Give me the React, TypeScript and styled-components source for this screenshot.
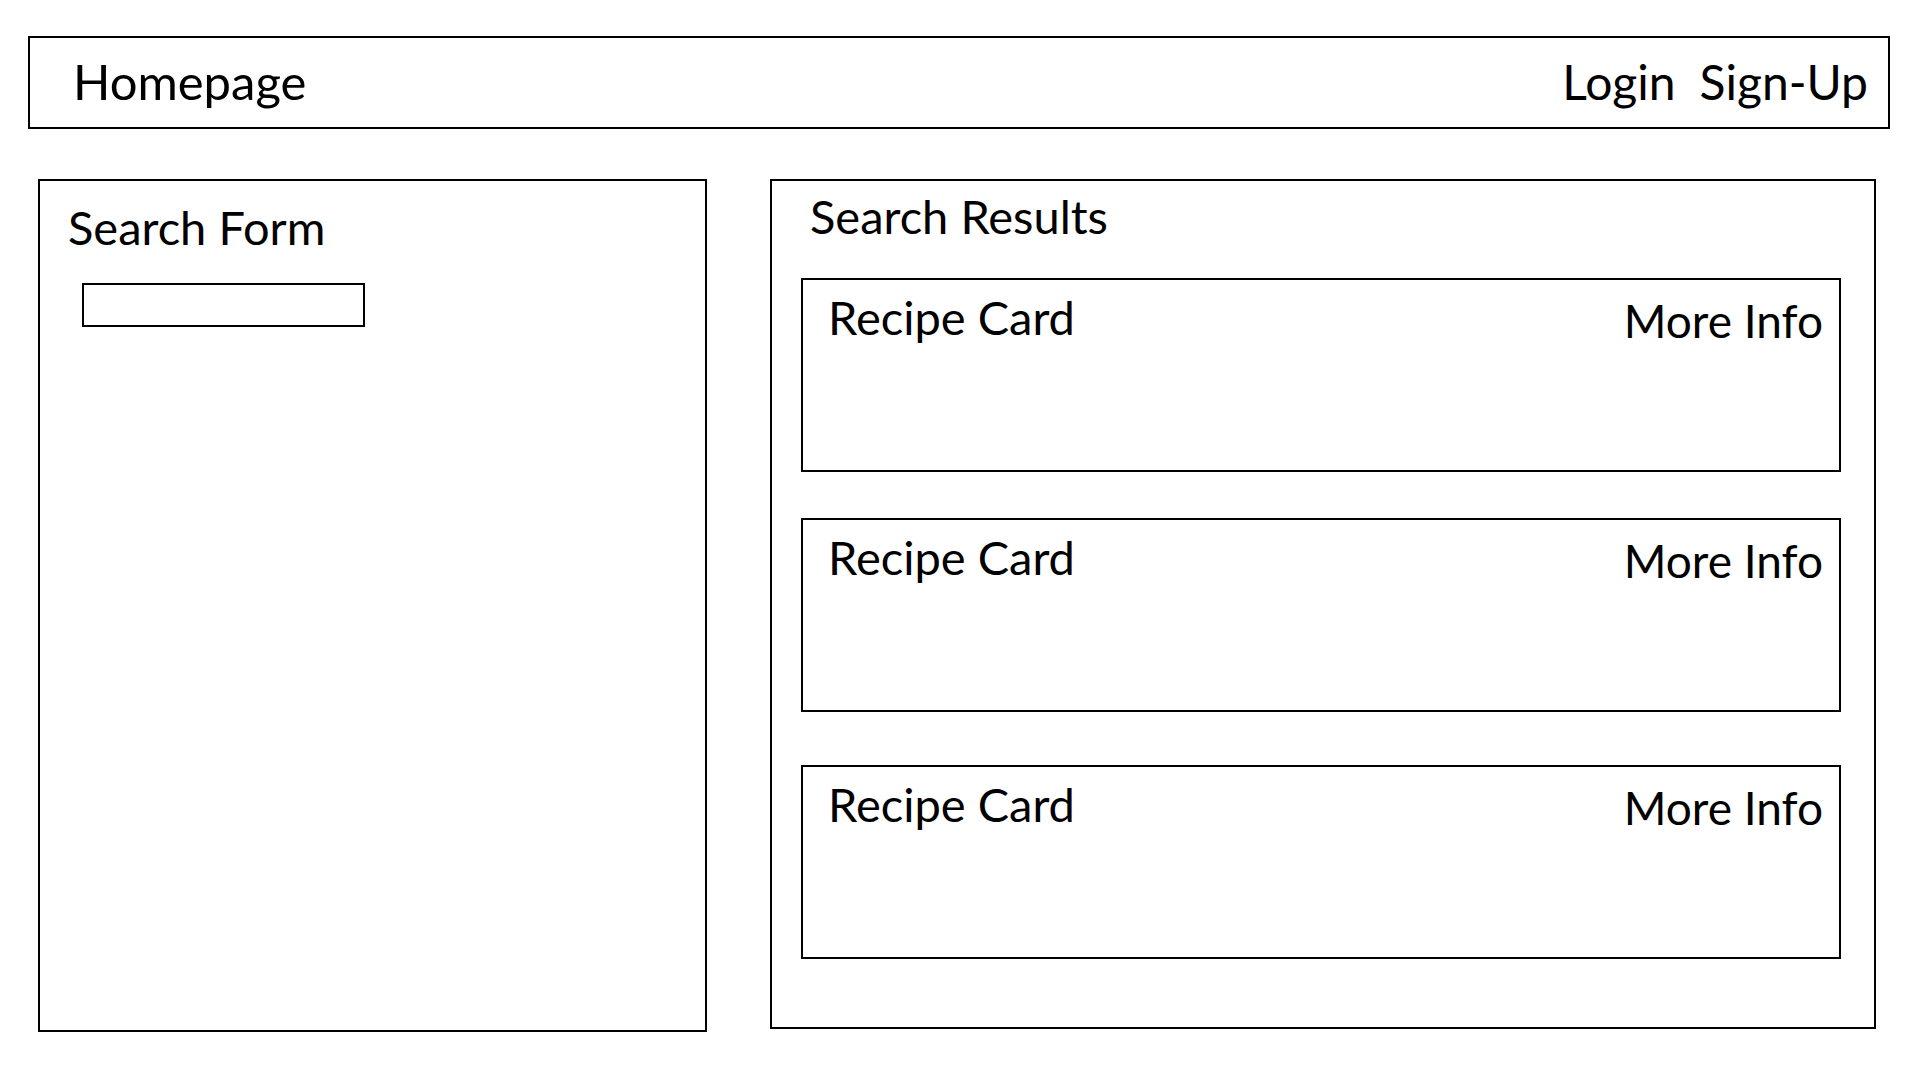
import { createGlobalStyle } from 'styled-components';
import styled from 'styled-components';

/* ─── Global ─── */
const GlobalStyle = createGlobalStyle`
  html, body {
    margin: 0;
    padding: 0;
    background: #fff;
  }
  body {
    font-family: Lato, 'Open Sans', sans-serif;
    color: #000;
  }
  * {
    box-sizing: border-box;
  }
`;

/* ─── Data ─── */
const recipes = [
  { id: 1, title: 'Recipe Card', gap: 0 },
  { id: 2, title: 'Recipe Card', gap: 46 },
  { id: 3, title: 'Recipe Card', gap: 53 },
];

/* ─── Layout ─── */
const Page = styled.div`
  width: 1920px;
  height: 1080px;
  padding: 36px 30px 0 28px;
`;

const Header = styled.header`
  height: 93px;
  border: 2px solid #000;
  display: flex;
  align-items: center;
  justify-content: space-between;
  padding: 0 20px 2px 43px;
`;

const Brand = styled.a`
  font-size: 49px;
  line-height: 1;
  color: #000;
  text-decoration: none;
`;

const AuthLinks = styled.nav`
  display: flex;
  gap: 24px;
`;

const AuthLink = styled.a`
  font-size: 48px;
  line-height: 1;
  color: #000;
  text-decoration: none;
`;

const Main = styled.main`
  display: flex;
  align-items: flex-start;
  gap: 63px;
  margin-top: 50px;
  padding-left: 10px;
`;

const Panel = styled.section<{ $width: number; $height: number }>`
  width: ${(p) => p.$width}px;
  height: ${(p) => p.$height}px;
  border: 2px solid #000;
  display: flex;
  flex-direction: column;
`;

/* ─── Search form ─── */
const FormPanel = styled(Panel)`
  padding: 23px 0 0 28px;
`;

const PanelTitle = styled.h2<{ $size: number; $indent?: number }>`
  margin: 0 0 0 ${(p) => p.$indent ?? 0}px;
  font-weight: 400;
  font-size: ${(p) => p.$size}px;
  line-height: 1;
`;

const SearchInput = styled.input`
  width: 283px;
  height: 44px;
  margin: 32px 0 0 14px;
  border: 2px solid #000;
  border-radius: 0;
  padding: 0 10px;
  font-family: inherit;
  font-size: 20px;
  outline: none;
  background: #fff;
`;

/* ─── Results ─── */
const ResultsPanel = styled(Panel)`
  padding: 12px 33px 0 29px;
`;

const CardList = styled.div`
  display: flex;
  flex-direction: column;
  margin-top: 38px;
`;

const RecipeCard = styled.article<{ $gap: number }>`
  height: 194px;
  margin-top: ${(p) => p.$gap}px;
  border: 2px solid #000;
  display: flex;
  justify-content: space-between;
  align-items: flex-start;
  padding: 14px 16px 0 25px;
`;

const CardTitle = styled.h3`
  margin: 0;
  font-weight: 400;
  font-size: 47px;
  line-height: 1;
`;

const MoreInfo = styled.a`
  margin-top: 4px;
  font-size: 46px;
  line-height: 1;
  color: #000;
  text-decoration: none;
`;

export default function App() {
  return (
    <>
      <GlobalStyle />
      <Page>
        <Header>
          <Brand href="#">Homepage</Brand>
          <AuthLinks>
            <AuthLink href="#">Login</AuthLink>
            <AuthLink href="#">Sign-Up</AuthLink>
          </AuthLinks>
        </Header>

        <Main>
          <FormPanel $width={669} $height={853}>
            <PanelTitle $size={47}>Search Form</PanelTitle>
            <SearchInput type="text" aria-label="Search" />
          </FormPanel>

          <ResultsPanel $width={1106} $height={850}>
            <PanelTitle $size={47} $indent={9}>Search Results</PanelTitle>
            <CardList>
              {recipes.map((r) => (
                <RecipeCard key={r.id} $gap={r.gap}>
                  <CardTitle>{r.title}</CardTitle>
                  <MoreInfo href="#">More Info</MoreInfo>
                </RecipeCard>
              ))}
            </CardList>
          </ResultsPanel>
        </Main>
      </Page>
    </>
  );
}
